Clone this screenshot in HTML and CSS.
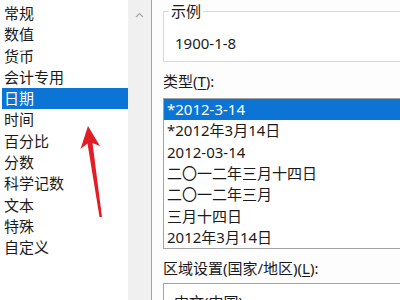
FILE: index.html
```html
<!DOCTYPE html>
<html lang="zh-CN">
<head>
    <meta charset="UTF-8">
    <meta name="viewport" content="width=device-width, initial-scale=1.0">
    <title>设置单元格格式 - 日期</title>
    <link rel="stylesheet" href="styles.css">
</head>
<body>
    <div class="dialog">
        <div class="category">
            <ul class="category-list">
                <li>常规</li>
                <li>数值</li>
                <li>货币</li>
                <li>会计专用</li>
                <li class="selected">日期</li>
                <li>时间</li>
                <li>百分比</li>
                <li>分数</li>
                <li>科学记数</li>
                <li>文本</li>
                <li>特殊</li>
                <li>自定义</li>
            </ul>
            <div class="scrollbar">
                <svg class="scroll-up" width="9" height="6" viewBox="0 0 9 6">
                    <path d="M1 5 L4.5 1.5 L8 5" fill="none" stroke="#a8a8a8" stroke-width="1.2"/>
                </svg>
            </div>
        </div>

        <div class="details">
            <fieldset class="sample">
                <legend>示例</legend>
                <div class="sample-value">1900-1-8</div>
            </fieldset>

            <div class="field-label">类型(<u>T</u>):</div>
            <ul class="listbox type-list">
                <li class="selected">*2012-3-14</li>
                <li>*2012年3月14日</li>
                <li>2012-03-14</li>
                <li>二〇一二年三月十四日</li>
                <li>二〇一二年三月</li>
                <li>三月十四日</li>
                <li>2012年3月14日</li>
            </ul>

            <div class="field-label">区域设置(国家/地区)(<u>L</u>):</div>
            <div class="listbox locale">中文(中国)</div>
        </div>

        <!-- red annotation arrow pointing at 日期 -->
        <svg class="arrow" width="400" height="300" viewBox="0 0 400 300">
            <polygon points="88,126 100,146 92.5,143 102,217 99.5,217 87.5,143.5 80.5,149" fill="#e11d25"/>
        </svg>
    </div>
</body>
</html>
```

FILE: styles.css
```css
:root {
    --text-color: #1a1a1a;
    --select-bg: #0b74d4;
    --list-border: #a3a3a3;
    --group-border: #d8d8d8;
    --scroll-bg: #f0f0f0;
}

body {
    margin: 0;
    background-color: #fdfdfd;
    color: var(--text-color);
    font-family: "Noto Sans", "Noto Sans CJK SC", sans-serif;
    font-size: 15px;
}

.dialog {
    position: relative;
    display: flex;
    width: 400px;
    height: 300px;
    overflow: hidden;
}

/* left category list */
.category {
    display: flex;
    width: 152px;
    flex-shrink: 0;
    box-sizing: border-box;
    background-color: #fff;
    border-right: 1px solid var(--list-border);
}

.category-list {
    flex: 1;
    margin: 0;
    padding: 3px 0 0 2px;
    list-style: none;
}

.category-list li {
    height: 21.3px;
    line-height: 21.3px;
    padding-left: 2px;
    white-space: nowrap;
}

.selected {
    background-color: var(--select-bg);
    color: #fff;
}

.scrollbar {
    width: 23px;
    background-color: var(--scroll-bg);
    display: flex;
    justify-content: center;
    align-items: flex-start;
}

.scroll-up {
    margin-top: 12px;
}

/* right side */
.details {
    width: 300px;
    flex-shrink: 0;
    margin-left: 11px;
}

.sample {
    margin: 1px 0 0;
    padding: 12px 10px 8px 11px;
    border: 1px solid var(--group-border);
    min-width: 0;
    background-color: #fff;
}

.sample legend {
    margin-left: -6px;
    padding: 0 2px;
    line-height: 20px;
}

.sample-value {
    line-height: 20px;
}

.field-label {
    margin-top: 9px;
    line-height: 20px;
    white-space: nowrap;
}

.field-label u {
    text-underline-offset: 2px;
}

.listbox {
    margin: 7px 0 0;
    padding: 0;
    border: 1px solid var(--list-border);
    background-color: #fff;
    list-style: none;
}

.type-list li {
    height: 21.33px;
    line-height: 21.33px;
    padding-left: 3px;
    white-space: nowrap;
}

.locale {
    margin-top: 5px;
    padding: 8px 0 0 10px;
    height: 40px;
    line-height: 20px;
}

.arrow {
    position: absolute;
    left: 0;
    top: 0;
    pointer-events: none;
}
```
